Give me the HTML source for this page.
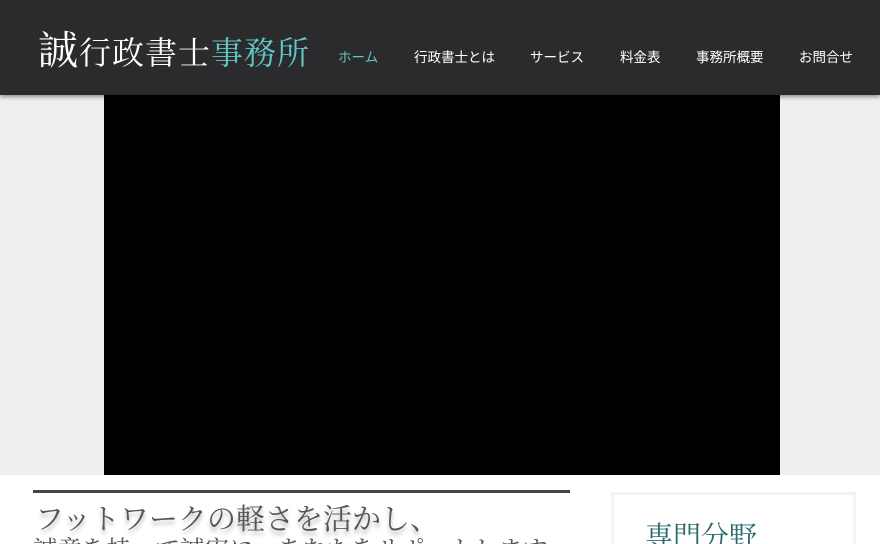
<!DOCTYPE html>
<html><head><meta charset="utf-8"><style>
*{margin:0;padding:0;box-sizing:border-box}
html,body{width:880px;height:544px;overflow:hidden}
body{background:#fff;font-family:"Liberation Serif","Noto Serif CJK SC",serif;position:relative}
.hdr{position:absolute;left:0;top:0;width:880px;height:95px;background:#2b2b2d;box-shadow:0 2px 4px rgba(0,0,0,.4);z-index:2}
.logo{position:absolute;left:38px;top:19px;color:#fff;font-size:32px;white-space:nowrap;letter-spacing:1px}
.logo .b{font-size:40px}
.logo .t{color:#5fc7c7}
.nav{position:absolute;top:46px;font-family:"Liberation Sans","Noto Sans CJK JP",sans-serif;font-size:13.5px;color:#fff;white-space:nowrap}
.gray{position:absolute;left:0;top:95px;width:880px;height:380px;background:#eeeeef}
.vid{position:absolute;left:104px;top:95px;width:676px;height:380px;background:#000}
.line{position:absolute;left:33px;top:490px;width:537px;height:3px;background:#444}
.h1{position:absolute;left:35px;top:497px;font-size:29px;color:#555;white-space:nowrap;text-shadow:0 4px 4px rgba(0,0,0,.3)}
.h2{position:absolute;left:33px;top:531px;font-size:24.5px;color:#555;white-space:nowrap}
.box{position:absolute;left:611px;top:492px;width:245px;height:52px;border:3px solid #f8f2ea;border-bottom:none;overflow:hidden}
.box div{position:absolute;left:31px;top:20px;font-size:28px;color:#2a6b6b;white-space:nowrap}
</style></head><body>
<div class="hdr">
<div class="logo"><span class="b">誠</span>行政書士<span class="t">事務所</span></div>
<div class="nav" style="left:338px;color:#5fc7c7">ホーム</div>
<div class="nav" style="left:414px">行政書士とは</div>
<div class="nav" style="left:530px">サービス</div>
<div class="nav" style="left:620px">料金表</div>
<div class="nav" style="left:696px">事務所概要</div>
<div class="nav" style="left:799px">お問合せ</div>
</div>
<div class="gray"></div>
<div class="vid"></div>
<div class="line"></div>
<div class="h1">フットワークの軽さを活かし、</div>
<div class="h2">誠意を持って誠実に、あなたをサポートします</div>
<div class="box"><div>専門分野</div></div>
</body></html>
